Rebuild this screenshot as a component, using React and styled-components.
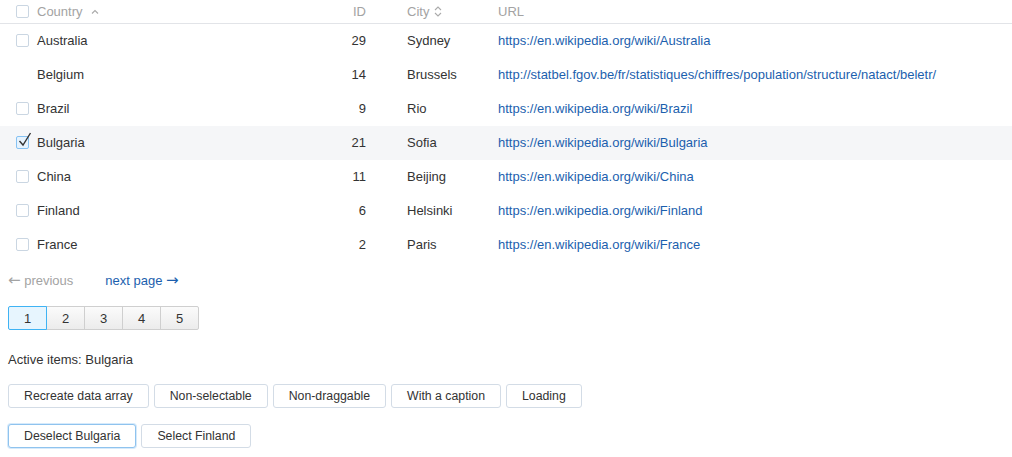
import React from 'react';
import styled, { createGlobalStyle } from 'styled-components';

const GlobalStyle = createGlobalStyle`
  body {
    margin: 0;
    background: #fff;
    font-family: 'Liberation Sans', Arial, sans-serif;
    font-size: 13px;
    color: #333;
  }
`;

const Table = styled.div`
  width: 100%;
`;

const Row = styled.div`
  display: grid;
  grid-template-columns: 326px 40px 132px 1fr;
  align-items: center;
  box-sizing: border-box;
  height: ${p => (p.header ? '24px' : '34px')};
  padding-bottom: ${p => (p.header ? '1px' : '2px')};
  background: ${p => (p.active ? '#f5f6f8' : 'transparent')};
  border-bottom: ${p => (p.header ? '1px solid #e2e4e8' : 'none')};
  color: ${p => (p.header ? '#a3a3a3' : '#333')};
  white-space: nowrap;
`;

const NameCell = styled.div`
  display: flex;
  align-items: center;
  gap: 8px;
  padding-left: 16px;
`;

const IdCell = styled.div`
  text-align: right;
`;

const CityCell = styled.div`
  display: flex;
  align-items: center;
  gap: 5px;
  padding-left: 41px;
`;

const Link = styled.a`
  color: #1c5fae;
  text-decoration: none;
`;

const Box = styled.span`
  position: relative;
  display: inline-block;
  width: 13px;
  height: 13px;
  box-sizing: border-box;
  border: 1px solid ${p => (p.checked ? '#86c2f3' : '#cad6e2')};
  background: ${p => (p.checked ? '#e6f3fe' : '#fff')};
  border-radius: 2px;
  visibility: ${p => (p.hidden ? 'hidden' : 'visible')};
`;

const Tick = styled.svg`
  position: absolute;
  left: 1px;
  top: -5px;
`;

const Checkbox = ({ checked, hidden }) => (
  <Box checked={checked} hidden={hidden}>
    {checked && (
      <Tick width="14" height="15" viewBox="0 0 14 15">
        <path d="M1.5 9 L5 13 L12.5 1" fill="none" stroke="#333" strokeWidth="1.4" />
      </Tick>
    )}
  </Box>
);

const Caret = styled.svg`
  display: block;
`;

const Content = styled.div`
  padding: 8px;
`;

const Nav = styled.div`
  display: flex;
  gap: 32px;
  margin-top: 2px;
  height: 18px;
  line-height: 18px;
`;

const NavLink = styled.span`
  color: ${p => (p.disabled ? '#a3a3a3' : '#1c5fae')};
`;

const Arrow = styled.span`
  font-family: 'DejaVu Sans', sans-serif;
  font-size: 15px;
  line-height: 1;
`;

const Pages = styled.div`
  display: flex;
  margin-top: 16px;
`;

const PageButton = styled.div`
  width: 39px;
  height: 24px;
  box-sizing: border-box;
  display: flex;
  align-items: center;
  justify-content: center;
  border: 1px solid ${p => (p.active ? '#3fb3f4' : '#cfcfcf')};
  margin-left: ${p => (p.first ? '0' : '-1px')};
  position: relative;
  z-index: ${p => (p.active ? 1 : 0)};
  background: ${p => (p.active ? '#e7f5fe' : 'linear-gradient(#fbfbfb, #ececec)')};
  border-radius: ${p => (p.first ? '2px 0 0 2px' : p.last ? '0 2px 2px 0' : '0')};
  color: #333;
`;

const ActiveText = styled.div`
  margin-top: 21px;
  line-height: 18px;
`;

const ButtonRow = styled.div`
  display: flex;
  gap: 5px;
  margin-top: ${p => p.top}px;
`;

const Button = styled.button`
  height: 24px;
  padding: 0 15px;
  box-sizing: border-box;
  background: #fff;
  border: 1px solid ${p => (p.focused ? '#8fc3ee' : '#d3dce6')};
  box-shadow: ${p => (p.focused ? '0 0 0 1px #d6eafb' : 'none')};
  border-radius: 3px;
  font-family: inherit;
  font-size: 12.3px;
  color: #333;
`;

const data = [
  { name: 'Australia', id: 29, city: 'Sydney', url: 'https://en.wikipedia.org/wiki/Australia' },
  { name: 'Belgium', id: 14, city: 'Brussels', url: 'http://statbel.fgov.be/fr/statistiques/chiffres/population/structure/natact/beletr/', noSelect: true },
  { name: 'Brazil', id: 9, city: 'Rio', url: 'https://en.wikipedia.org/wiki/Brazil' },
  { name: 'Bulgaria', id: 21, city: 'Sofia', url: 'https://en.wikipedia.org/wiki/Bulgaria', checked: true },
  { name: 'China', id: 11, city: 'Beijing', url: 'https://en.wikipedia.org/wiki/China' },
  { name: 'Finland', id: 6, city: 'Helsinki', url: 'https://en.wikipedia.org/wiki/Finland' },
  { name: 'France', id: 2, city: 'Paris', url: 'https://en.wikipedia.org/wiki/France' },
];

export default function App() {
  return (
    <>
      <GlobalStyle />
      <Table>
        <Row header>
          <NameCell>
            <Checkbox />
            <span>Country</span>
            <Caret width="8" height="5" viewBox="0 0 8 5">
              <path d="M1 4.5 L4 1.5 L7 4.5" fill="none" stroke="#aaa" strokeWidth="1.1" />
            </Caret>
          </NameCell>
          <IdCell>ID</IdCell>
          <CityCell>
            <span>City</span>
            <Caret width="8" height="11" viewBox="0 0 8 11">
              <path d="M1 4 L4 1 L7 4 M1 7 L4 10 L7 7" fill="none" stroke="#aaa" strokeWidth="1.1" />
            </Caret>
          </CityCell>
          <div>URL</div>
        </Row>
        {data.map(item => (
          <Row key={`row-${item.id}`} active={item.checked}>
            <NameCell>
              <Checkbox checked={item.checked} hidden={item.noSelect} />
              <span>{item.name}</span>
            </NameCell>
            <IdCell>{item.id}</IdCell>
            <CityCell>{item.city}</CityCell>
            <div>
              <Link href={item.url}>{item.url}</Link>
            </div>
          </Row>
        ))}
      </Table>
      <Content>
        <Nav>
          <NavLink disabled><Arrow>←</Arrow> previous</NavLink>
          <NavLink>next page <Arrow>→</Arrow></NavLink>
        </Nav>
        <Pages>
          {[1, 2, 3, 4, 5].map(n => (
            <PageButton key={`page-${n}`} active={n === 1} first={n === 1} last={n === 5}>
              {n}
            </PageButton>
          ))}
        </Pages>
        <ActiveText>Active items: Bulgaria</ActiveText>
        <ButtonRow top={15}>
          <Button>Recreate data array</Button>
          <Button>Non-selectable</Button>
          <Button>Non-draggable</Button>
          <Button>With a caption</Button>
          <Button>Loading</Button>
        </ButtonRow>
        <ButtonRow top={16}>
          <Button focused>Deselect Bulgaria</Button>
          <Button>Select Finland</Button>
        </ButtonRow>
      </Content>
    </>
  );
}
